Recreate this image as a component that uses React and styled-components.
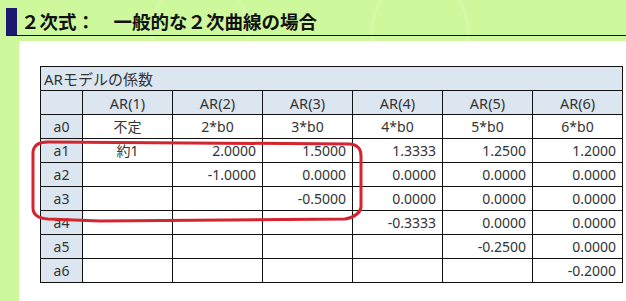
import styled, { createGlobalStyle } from 'styled-components';

const GlobalStyle = createGlobalStyle`
  html, body {
    margin: 0;
    padding: 0;
  }
  body {
    width: 626px;
    height: 301px;
    overflow: hidden;
    background-color: #cdf99c;
    background-image:
      radial-gradient(circle at 200px 30px, transparent 46px, rgba(255, 255, 220, 0.2) 48px, transparent 51px),
      radial-gradient(circle at 420px 30px, transparent 46px, rgba(255, 255, 220, 0.2) 48px, transparent 51px);
    font-family: 'Noto Sans', 'Noto Sans CJK JP', sans-serif;
  }
`;

const columns = ['AR(1)', 'AR(2)', 'AR(3)', 'AR(4)', 'AR(5)', 'AR(6)'];

const rows = [
  { label: 'a0', cells: ['不定', '2*b0', '3*b0', '4*b0', '5*b0', '6*b0'], center: true },
  { label: 'a1', cells: ['約1', '2.0000', '1.5000', '1.3333', '1.2500', '1.2000'] },
  { label: 'a2', cells: ['', '-1.0000', '0.0000', '0.0000', '0.0000', '0.0000'] },
  { label: 'a3', cells: ['', '', '-0.5000', '0.0000', '0.0000', '0.0000'] },
  { label: 'a4', cells: ['', '', '', '-0.3333', '0.0000', '0.0000'] },
  { label: 'a5', cells: ['', '', '', '', '-0.2500', '0.0000'] },
  { label: 'a6', cells: ['', '', '', '', '', '-0.2000'] },
];

const App = () => {
  return (
    <>
      <GlobalStyle />
      <Page>
        <Title>２次式：　一般的な２次曲線の場合</Title>
        <Panel>
          <TableWrap>
            <Table>
              <colgroup>
                <col style={{ width: 42 }} />
                {columns.map((c) => (
                  <col key={c} style={{ width: 90 }} />
                ))}
              </colgroup>
              <tbody>
                <tr>
                  <Caption colSpan={7}>ARモデルの係数</Caption>
                </tr>
                <tr>
                  <HeadCell />
                  {columns.map((c) => (
                    <HeadCell key={c} wide>
                      {c}
                    </HeadCell>
                  ))}
                </tr>
                {rows.map((row) => (
                  <tr key={row.label}>
                    <HeadCell>{row.label}</HeadCell>
                    {row.cells.map((v, i) => (
                      <Cell key={i} center={row.center || v === '約1'}>
                        {v}
                      </Cell>
                    ))}
                  </tr>
                ))}
              </tbody>
            </Table>
            <Mark viewBox="0 0 340 90" width="340" height="90">
              <path
                d="M 3 16 Q 4 6 18 6 L 320 8 Q 331 9 331 20 L 331 71 Q 330 80 315 83 L 70 85 L 18 83 Q 3 82 3 72 Z"
                fill="none"
                stroke="#d3252f"
                strokeWidth="3"
                strokeLinejoin="round"
              />
            </Mark>
          </TableWrap>
        </Panel>
      </Page>
    </>
  );
};

export default App;

const Page = styled.div`
  display: flex;
  flex-direction: column;
  padding-top: 8px;
  height: 301px;
  box-sizing: border-box;
`;

const Title = styled.h2`
  margin: 0 0 0 6px;
  height: 28px;
  box-sizing: border-box;
  border-left: 11px solid #1b1a6e;
  border-bottom: 1.5px solid #111;
  padding-left: 4px;
  font-family: 'Noto Sans CJK JP', sans-serif;
  font-size: 18.5px;
  font-weight: 700;
  line-height: 27px;
  color: #111;
  white-space: nowrap;
`;

const Panel = styled.div`
  flex: 1;
  margin: 5px 0 0 19px;
  background: #fff;
  padding: 25px 0 0 21px;
`;

const TableWrap = styled.div`
  position: relative;
  width: 582px;
`;

const Table = styled.table`
  border-collapse: collapse;
  table-layout: fixed;
  width: 582px;
  font-size: 14px;
  color: #333;

  td {
    height: 24px;
    padding: 0 6px;
    border: 1px solid #111;
    box-sizing: border-box;
    line-height: 20px;
    white-space: nowrap;
  }
`;

const Caption = styled.td`
  background: #dce6f1;
  text-align: left;
  && {
    padding-left: 3px;
    font-size: 15px;
  }
`;

const HeadCell = styled.td`
  background: #dce6f1;
  text-align: center;
  font-size: ${({ wide }) => (wide ? '14.5px' : '14px')};
`;

const Cell = styled.td`
  background: #fff;
  text-align: ${({ center }) => (center ? 'center' : 'right')};
`;

const Mark = styled.svg`
  position: absolute;
  left: -10px;
  top: 70px;
  overflow: visible;
  pointer-events: none;
`;
